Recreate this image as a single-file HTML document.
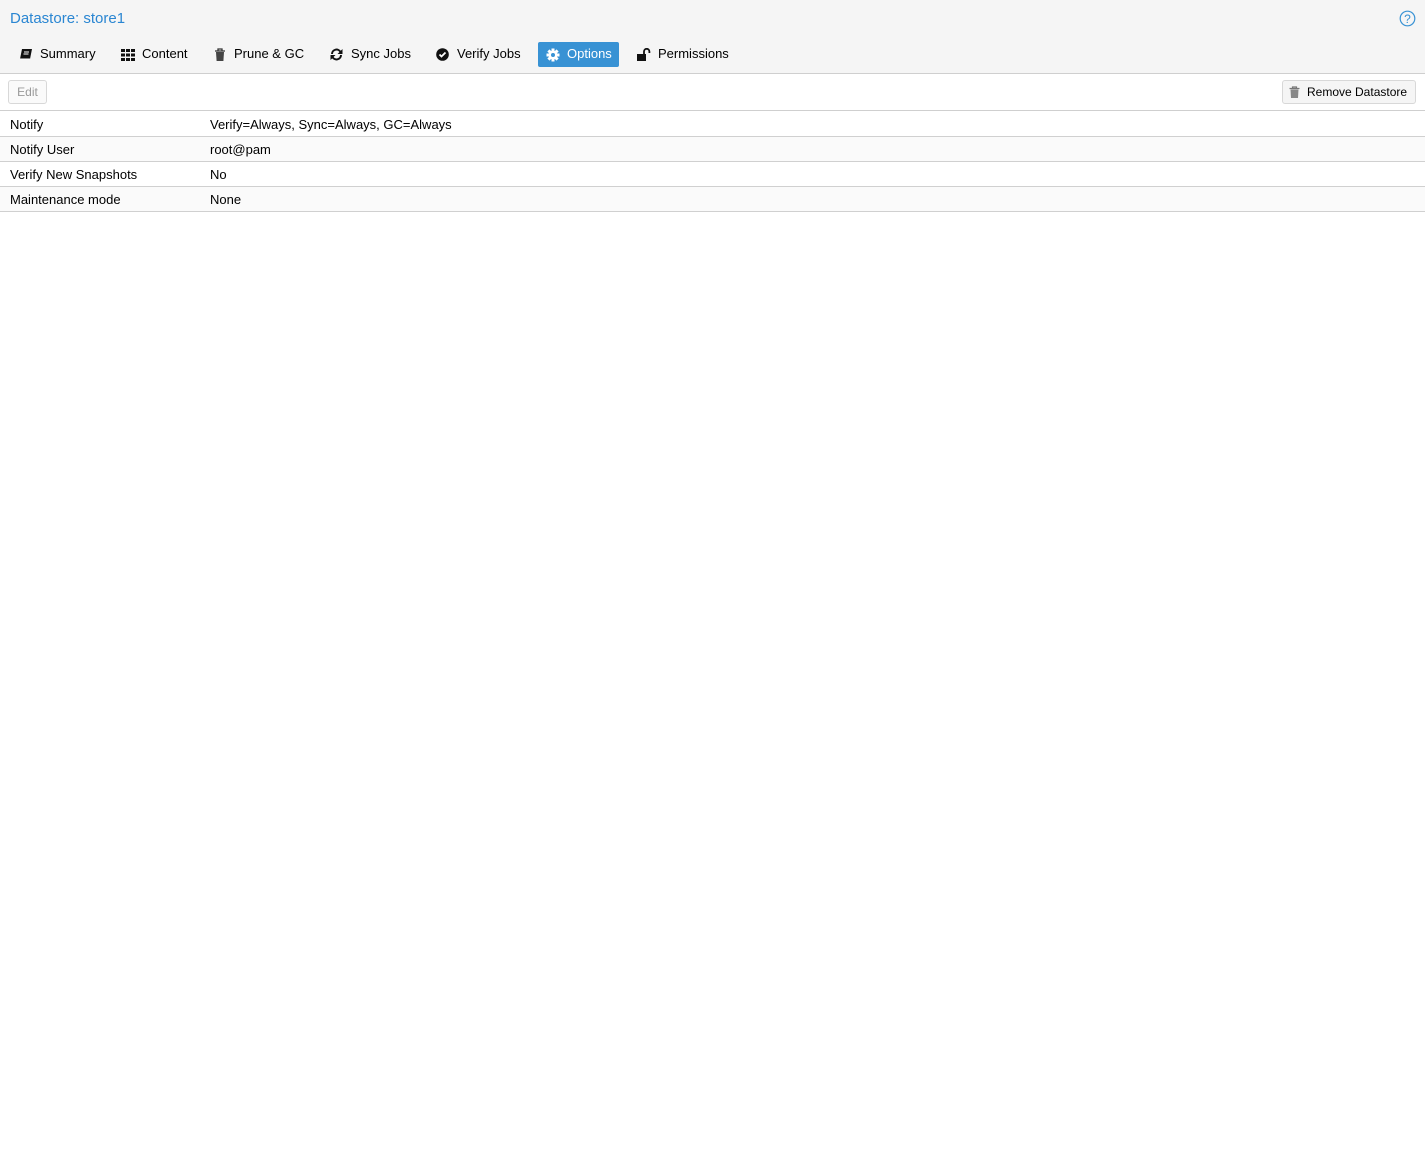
<!DOCTYPE html>
<html><head><style>
*{margin:0;padding:0;box-sizing:border-box}
body{width:1425px;height:1158px;background:#fff;font-family:"Liberation Sans",sans-serif;font-size:13px;color:#000;position:relative;overflow:hidden}
.hdr{position:absolute;left:0;top:0;width:1425px;height:74px;background:#f5f5f5;border-bottom:1px solid #cfcfcf}
.title{position:absolute;left:10px;top:10px;font-size:15px;color:#2a86d2}
.help{position:absolute;left:1399px;top:10px}
.tab{position:absolute;top:42px;height:25px;line-height:24px;padding:0 8px 0 0;white-space:nowrap}
.tab svg{position:absolute;top:6px}
.tab.act{background:#3892d4;color:#fff;border-radius:2px}
.tb{position:absolute;top:74px;left:0;width:1425px;height:37px;border-bottom:1px solid #cfcfcf}
.btn{position:absolute;top:6px;height:24px;line-height:22px;border:1px solid #d8d8d8;border-radius:3px;background:#f5f5f5;font-size:12px}
.row{position:absolute;left:0;width:1425px;height:25px;border-bottom:1px solid #d0d0d0;line-height:26px}
.row span{position:absolute;left:10px}
.row b{position:absolute;left:210px;font-weight:normal}
</style></head><body>
<div class="hdr">
<div class="title">Datastore: store1</div>
<svg class="help" width="17" height="17" viewBox="0 0 17 17"><circle cx="8.5" cy="8.5" r="7.3" fill="none" stroke="#3892d4" stroke-width="1.2"/><text x="8.5" y="13" text-anchor="middle" font-family="Liberation Sans" font-size="12" fill="#3892d4">?</text></svg>

<div class="tab" style="left:19px;padding-left:21px"><svg style="left:0" width="14" height="13" viewBox="0 0 14 13"><path d="M3 1h10l-2 10H1z" fill="#111"/><path d="M1 11h10" stroke="#fff" stroke-width="1"/><path d="M5 4h5M4.5 6h5" stroke="#fff"/></svg>Summary</div>
<div class="tab" style="left:121px;padding-left:21px"><svg style="left:0;top:7px" width="14" height="12" viewBox="0 0 14 12"><g fill="#111"><rect x="0" y="0" width="4" height="3"/><rect x="5" y="0" width="4" height="3"/><rect x="10" y="0" width="4" height="3"/><rect x="0" y="4.5" width="4" height="3"/><rect x="5" y="4.5" width="4" height="3"/><rect x="10" y="4.5" width="4" height="3"/><rect x="0" y="9" width="4" height="3"/><rect x="5" y="9" width="4" height="3"/><rect x="10" y="9" width="4" height="3"/></g></svg>Content</div>
<div class="tab" style="left:214px;padding-left:20px"><svg style="left:0;top:6px" width="12" height="13" viewBox="0 0 12 13"><path d="M1 3h10M4 3V1h4v2" stroke="#333" stroke-width="1.3" fill="none"/><path d="M2 4h8l-.6 9H2.6z" fill="#444"/></svg>Prune &amp; GC</div>
<div class="tab" style="left:330px;padding-left:21px"><svg style="left:0;top:6px" width="13" height="13" viewBox="0 0 13 13"><path d="M2 6A4.5 4.5 0 0 1 10.5 4M11 7A4.5 4.5 0 0 1 2.5 9" stroke="#111" stroke-width="2" fill="none"/><path d="M12.5 1v5h-5zM.5 12V7h5z" fill="#111"/></svg>Sync Jobs</div>
<div class="tab" style="left:436px;padding-left:21px"><svg style="left:0;top:6px" width="13" height="13" viewBox="0 0 13 13"><circle cx="6.5" cy="6.5" r="6.3" fill="#111"/><path d="M3.5 6.5l2 2 4-4" stroke="#fff" stroke-width="1.8" fill="none"/></svg>Verify Jobs</div>
<div class="tab act" style="left:538px;width:81px;padding-left:29px;padding-right:0"><svg style="left:8px;top:6px" width="14" height="14" viewBox="0 0 14 14"><g fill="#fff"><circle cx="7" cy="7" r="4.5"/><rect x="5.5" y="0.5" width="3" height="13"/><rect x="0.5" y="5.5" width="13" height="3"/><rect x="5.5" y="0.5" width="3" height="13" transform="rotate(45 7 7)"/><rect x="5.5" y="0.5" width="3" height="13" transform="rotate(-45 7 7)"/></g><circle cx="7" cy="7" r="2" fill="#3892d4"/></svg>Options</div>
<div class="tab" style="left:637px;padding-left:21px"><svg style="left:0;top:6px" width="14" height="13" viewBox="0 0 14 13"><rect x="0" y="6" width="9" height="7" fill="#111"/><path d="M7 6V3.5a2.7 2.7 0 0 1 5.4 0V5" stroke="#111" stroke-width="1.8" fill="none"/></svg>Permissions</div>
</div>
<div class="tb">
<div class="btn" style="left:8px;width:39px;color:#999;text-align:center;background:#fafafa">Edit</div>
<div class="btn" style="left:1282px;width:134px;padding-left:24px"><svg style="position:absolute;left:6px;top:5px" width="11" height="12" viewBox="0 0 11 12"><path d="M0.5 2.5h10M3.5 2.5V1h4v1.5" stroke="#777" stroke-width="1.2" fill="none"/><path d="M1.5 3.5h8l-.5 8.5H2z" fill="#888"/></svg>Remove Datastore</div>
</div>
<div class="row" style="top:112px"><span>Notify</span><b>Verify=Always, Sync=Always, GC=Always</b></div>
<div class="row" style="top:137px;background:#fafafa"><span>Notify User</span><b>root@pam</b></div>
<div class="row" style="top:162px"><span>Verify New Snapshots</span><b>No</b></div>
<div class="row" style="top:187px;background:#fafafa"><span>Maintenance mode</span><b>None</b></div>
</body></html>
